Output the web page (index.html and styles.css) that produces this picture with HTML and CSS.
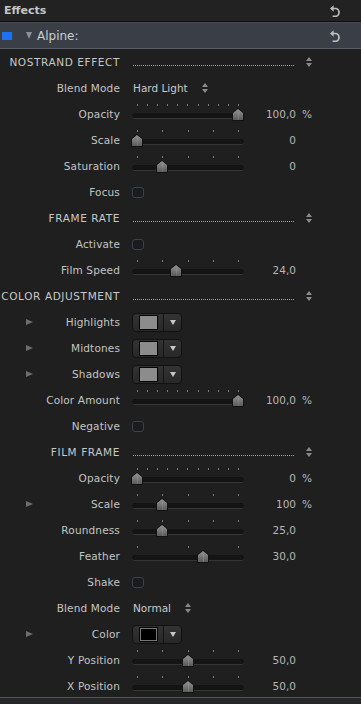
FILE: index.html
```html
<!DOCTYPE html>
<html lang="en">
<head>
    <meta charset="UTF-8">
    <meta name="viewport" content="width=device-width, initial-scale=1.0">
    <title>Effects</title>
    <link rel="stylesheet" href="styles.css">
</head>
<body>
    <div class="panel-head">
        <span>Effects</span>
        <svg class="reset" width="10" height="12" viewBox="0 0 10 12"><polygon points="0,3.5 3.6,0.3 3.6,6.7"/><path d="M3 3.5 H5.4 A3.6 3.9 0 0 1 5.4 11.3 H2.6"/></svg>
    </div>
    <div class="effect-bar">
        <span class="chip"></span>
        <span class="down-tri"></span>
        <span class="effect-name">Alpine:</span>
        <svg class="reset" width="10" height="12" viewBox="0 0 10 12"><polygon points="0,3.5 3.6,0.3 3.6,6.7"/><path d="M3 3.5 H5.4 A3.6 3.9 0 0 1 5.4 11.3 H2.6"/></svg>
    </div>

    <div class="rows">
        <!-- NOSTRAND EFFECT -->
        <div class="row section">
            <div class="label">NOSTRAND EFFECT</div>
            <div class="ctl"><span class="dots"></span><svg class="stepper" width="6" height="10" viewBox="0 0 6 10"><polygon points="0,4 3,0 6,4"/><polygon points="0,6 3,10 6,6"/></svg></div>
        </div>
        <div class="row">
            <div class="label">Blend Mode</div>
            <div class="ctl"><span class="popup">Hard Light</span><svg class="stepper" width="6" height="10" viewBox="0 0 6 10"><polygon points="0,4 3,0 6,4"/><polygon points="0,6 3,10 6,6"/></svg></div>
        </div>
        <div class="row">
            <div class="label">Opacity</div>
            <div class="ctl">
                <div class="slider"><div class="ticks"><i></i><i></i><i></i><i></i><i></i><i></i><i></i><i></i><i></i><i></i><i></i></div><div class="track"></div><div class="thumb" style="left:100px"></div></div>
                <span class="val">100,0</span><span class="unit">%</span>
            </div>
        </div>
        <div class="row">
            <div class="label">Scale</div>
            <div class="ctl">
                <div class="slider"><div class="ticks"><i></i><i></i><i></i><i></i><i></i></div><div class="track"></div><div class="thumb" style="left:-1px"></div></div>
                <span class="val">0</span>
            </div>
        </div>
        <div class="row">
            <div class="label">Saturation</div>
            <div class="ctl">
                <div class="slider"><div class="ticks"><i></i><i></i><i></i><i></i><i></i></div><div class="track"></div><div class="thumb" style="left:24px"></div></div>
                <span class="val">0</span>
            </div>
        </div>
        <div class="row">
            <div class="label">Focus</div>
            <div class="ctl"><span class="check"></span></div>
        </div>

        <!-- FRAME RATE -->
        <div class="row section">
            <div class="label">FRAME RATE</div>
            <div class="ctl"><span class="dots"></span><svg class="stepper" width="6" height="10" viewBox="0 0 6 10"><polygon points="0,4 3,0 6,4"/><polygon points="0,6 3,10 6,6"/></svg></div>
        </div>
        <div class="row">
            <div class="label">Activate</div>
            <div class="ctl"><span class="check"></span></div>
        </div>
        <div class="row">
            <div class="label">Film Speed</div>
            <div class="ctl">
                <div class="slider"><div class="ticks"><i></i><i></i><i></i><i></i><i></i></div><div class="track"></div><div class="thumb" style="left:38px"></div></div>
                <span class="val">24,0</span>
            </div>
        </div>

        <!-- COLOR ADJUSTMENT -->
        <div class="row section">
            <div class="label">COLOR ADJUSTMENT</div>
            <div class="ctl"><span class="dots"></span><svg class="stepper" width="6" height="10" viewBox="0 0 6 10"><polygon points="0,4 3,0 6,4"/><polygon points="0,6 3,10 6,6"/></svg></div>
        </div>
        <div class="row">
            <div class="label"><span class="disclose"></span>Highlights</div>
            <div class="ctl"><div class="well"><span class="well-swatch"><span class="swatch"></span></span><span class="well-arrow"><span class="arrow"></span></span></div></div>
        </div>
        <div class="row">
            <div class="label"><span class="disclose"></span>Midtones</div>
            <div class="ctl"><div class="well"><span class="well-swatch"><span class="swatch"></span></span><span class="well-arrow"><span class="arrow"></span></span></div></div>
        </div>
        <div class="row">
            <div class="label"><span class="disclose"></span>Shadows</div>
            <div class="ctl"><div class="well"><span class="well-swatch"><span class="swatch"></span></span><span class="well-arrow"><span class="arrow"></span></span></div></div>
        </div>
        <div class="row">
            <div class="label">Color Amount</div>
            <div class="ctl">
                <div class="slider"><div class="ticks"><i></i><i></i><i></i><i></i><i></i><i></i><i></i><i></i><i></i><i></i><i></i></div><div class="track"></div><div class="thumb" style="left:100px"></div></div>
                <span class="val">100,0</span><span class="unit">%</span>
            </div>
        </div>
        <div class="row">
            <div class="label">Negative</div>
            <div class="ctl"><span class="check"></span></div>
        </div>

        <!-- FILM FRAME -->
        <div class="row section">
            <div class="label">FILM FRAME</div>
            <div class="ctl"><span class="dots"></span><svg class="stepper" width="6" height="10" viewBox="0 0 6 10"><polygon points="0,4 3,0 6,4"/><polygon points="0,6 3,10 6,6"/></svg></div>
        </div>
        <div class="row">
            <div class="label">Opacity</div>
            <div class="ctl">
                <div class="slider"><div class="ticks"><i></i><i></i><i></i><i></i><i></i><i></i><i></i><i></i><i></i><i></i><i></i></div><div class="track"></div><div class="thumb" style="left:-1px"></div></div>
                <span class="val">0</span><span class="unit">%</span>
            </div>
        </div>
        <div class="row">
            <div class="label"><span class="disclose"></span>Scale</div>
            <div class="ctl">
                <div class="slider"><div class="ticks"><i></i><i></i><i></i><i></i><i></i></div><div class="track"></div><div class="thumb" style="left:24px"></div></div>
                <span class="val">100</span><span class="unit">%</span>
            </div>
        </div>
        <div class="row">
            <div class="label">Roundness</div>
            <div class="ctl">
                <div class="slider"><div class="ticks"><i></i><i></i><i></i><i></i><i></i></div><div class="track"></div><div class="thumb" style="left:24px"></div></div>
                <span class="val">25,0</span>
            </div>
        </div>
        <div class="row">
            <div class="label">Feather</div>
            <div class="ctl">
                <div class="slider"><div class="ticks"><i></i><i></i><i></i></div><div class="track"></div><div class="thumb" style="left:65px"></div></div>
                <span class="val">30,0</span>
            </div>
        </div>
        <div class="row">
            <div class="label">Shake</div>
            <div class="ctl"><span class="check"></span></div>
        </div>
        <div class="row">
            <div class="label">Blend Mode</div>
            <div class="ctl"><span class="popup">Normal</span><svg class="stepper" width="6" height="10" viewBox="0 0 6 10"><polygon points="0,4 3,0 6,4"/><polygon points="0,6 3,10 6,6"/></svg></div>
        </div>
        <div class="row">
            <div class="label"><span class="disclose"></span>Color</div>
            <div class="ctl"><div class="well"><span class="well-swatch"><span class="swatch black"></span></span><span class="well-arrow"><span class="arrow"></span></span></div></div>
        </div>
        <div class="row">
            <div class="label">Y Position</div>
            <div class="ctl">
                <div class="slider"><div class="ticks"><i></i><i></i><i></i><i></i><i></i></div><div class="track"></div><div class="thumb" style="left:50px"></div></div>
                <span class="val">50,0</span>
            </div>
        </div>
        <div class="row">
            <div class="label">X Position</div>
            <div class="ctl">
                <div class="slider"><div class="ticks"><i></i><i></i><i></i><i></i><i></i></div><div class="track"></div><div class="thumb" style="left:50px"></div></div>
                <span class="val">50,0</span>
            </div>
        </div>
    </div>
    <div class="panel-foot"></div>
</body>
</html>
```

FILE: styles.css
```css
body {
    margin: 0;
    width: 361px;
    height: 704px;
    overflow: hidden;
    background-color: #1f1f1f;
    font-family: "DejaVu Sans", "Liberation Sans", sans-serif;
    font-size: 10.5px;
    color: #c4c4c4;
}

/* Top header */
.panel-head {
    height: 21px;
    display: flex;
    align-items: center;
    justify-content: space-between;
    padding: 0 21px 0 4px;
    background-color: #222;
    border-bottom: 1px solid #0e0e0e;
    font-weight: bold;
    font-size: 11px;
    color: #c6c6c6;
}

.reset polygon {
    fill: #bdbdbd;
}

.reset path {
    fill: none;
    stroke: #bdbdbd;
    stroke-width: 1.7;
}

.effect-bar {
    height: 25px;
    display: flex;
    align-items: center;
    padding: 0 21px 0 2px;
    background-color: #3a3e46;
    border-top: 1px solid #474c55;
    border-bottom: 1px solid #565d68;
}

.chip {
    width: 10px;
    height: 8px;
    background-color: #1c72f2;
}

.down-tri {
    width: 0;
    height: 0;
    margin-left: 14px;
    border-top: 7px solid #8b9099;
    border-left: 3.5px solid transparent;
    border-right: 3.5px solid transparent;
}

.effect-name {
    flex: 1;
    margin-left: 5px;
    font-size: 12px;
    color: #c9cdd3;
}

/* Parameter rows */
.rows {
    height: 648px;
    overflow: hidden;
}

.row {
    height: 26px;
    display: flex;
    align-items: center;
}

.label {
    width: 120px;
    flex-shrink: 0;
    display: flex;
    align-items: center;
    justify-content: flex-end;
    white-space: nowrap;
    letter-spacing: 0.15px;
}

.section .label {
    color: #c8c8c8;
    letter-spacing: 0.6px;
    margin-right: -0.6px;
}

.disclose {
    width: 0;
    height: 0;
    margin-left: 26px;
    margin-right: auto;
    border-left: 7px solid #6d6d6d;
    border-top: 3.5px solid transparent;
    border-bottom: 3.5px solid transparent;
}

.ctl {
    margin-left: 12px;
    display: flex;
    align-items: center;
    height: 26px;
}

.section .ctl {
    margin-left: 12.6px;
}

.dots {
    width: 161px;
    margin-left: 1px;
    margin-top: 6px;
    border-bottom: 1px dotted #a8a8a8;
}

.stepper {
    margin-left: 12px;
}

.stepper polygon {
    fill: #8a8a8a;
}

.popup {
    margin-left: 1px;
    margin-right: 2px;
    color: #cacaca;
}

.check {
    width: 10px;
    height: 9px;
    border: 1px solid #39414e;
    border-radius: 3px;
    background-color: #1b1b1b;
}

/* Slider */
.slider {
    position: relative;
    width: 112px;
    height: 26px;
}

.ticks {
    display: flex;
    justify-content: space-between;
    padding: 3px 5px 0 5px;
}

.ticks i {
    width: 1px;
    height: 2px;
    background-color: #7a7a7a;
}

.track {
    margin-top: 7px;
    height: 5px;
    border-radius: 3px;
    background-color: #141414;
    border-bottom: 1px solid #363636;
}

.thumb {
    position: absolute;
    top: 7px;
    width: 12px;
    height: 13px;
    background-color: #121212;
    clip-path: polygon(50% 0, 100% 36%, 100% 100%, 0 100%, 0 36%);
}

.thumb::before {
    content: "";
    position: absolute;
    inset: 1px;
    background: linear-gradient(#949494, #5a5a5a);
    clip-path: polygon(50% 0, 100% 36%, 100% 100%, 0 100%, 0 36%);
}

.thumb::after {
    content: "";
    position: absolute;
    left: 6px;
    top: 4px;
    width: 1px;
    height: 8px;
    background-color: rgba(255, 255, 255, 0.12);
}

.val {
    width: 52px;
    text-align: right;
    color: #b6b6b6;
}

.unit {
    margin-left: 6px;
    color: #b6b6b6;
}

/* Color well */
.well {
    box-sizing: border-box;
    width: 50px;
    height: 19px;
    display: flex;
    border: 1px solid #111;
    border-radius: 4px;
    background: linear-gradient(#333, #282828);
}

.well-swatch {
    width: 30px;
    display: flex;
    align-items: center;
    justify-content: center;
    border-right: 1px solid #141414;
}

.swatch {
    width: 17px;
    height: 13px;
    border: 1px solid #050505;
    background-color: #8c8c8c;
}

.swatch.black {
    background-color: #000;
    box-shadow: inset 0 0 0 1px #777;
}

.well-arrow {
    flex: 1;
    display: flex;
    align-items: center;
    justify-content: center;
}

.arrow {
    width: 0;
    height: 0;
    border-top: 5px solid #c8c8c8;
    border-left: 3.5px solid transparent;
    border-right: 3.5px solid transparent;
}

.panel-foot {
    height: 7px;
    background-color: #262626;
    border-top: 1px solid #4f5663;
}
```
